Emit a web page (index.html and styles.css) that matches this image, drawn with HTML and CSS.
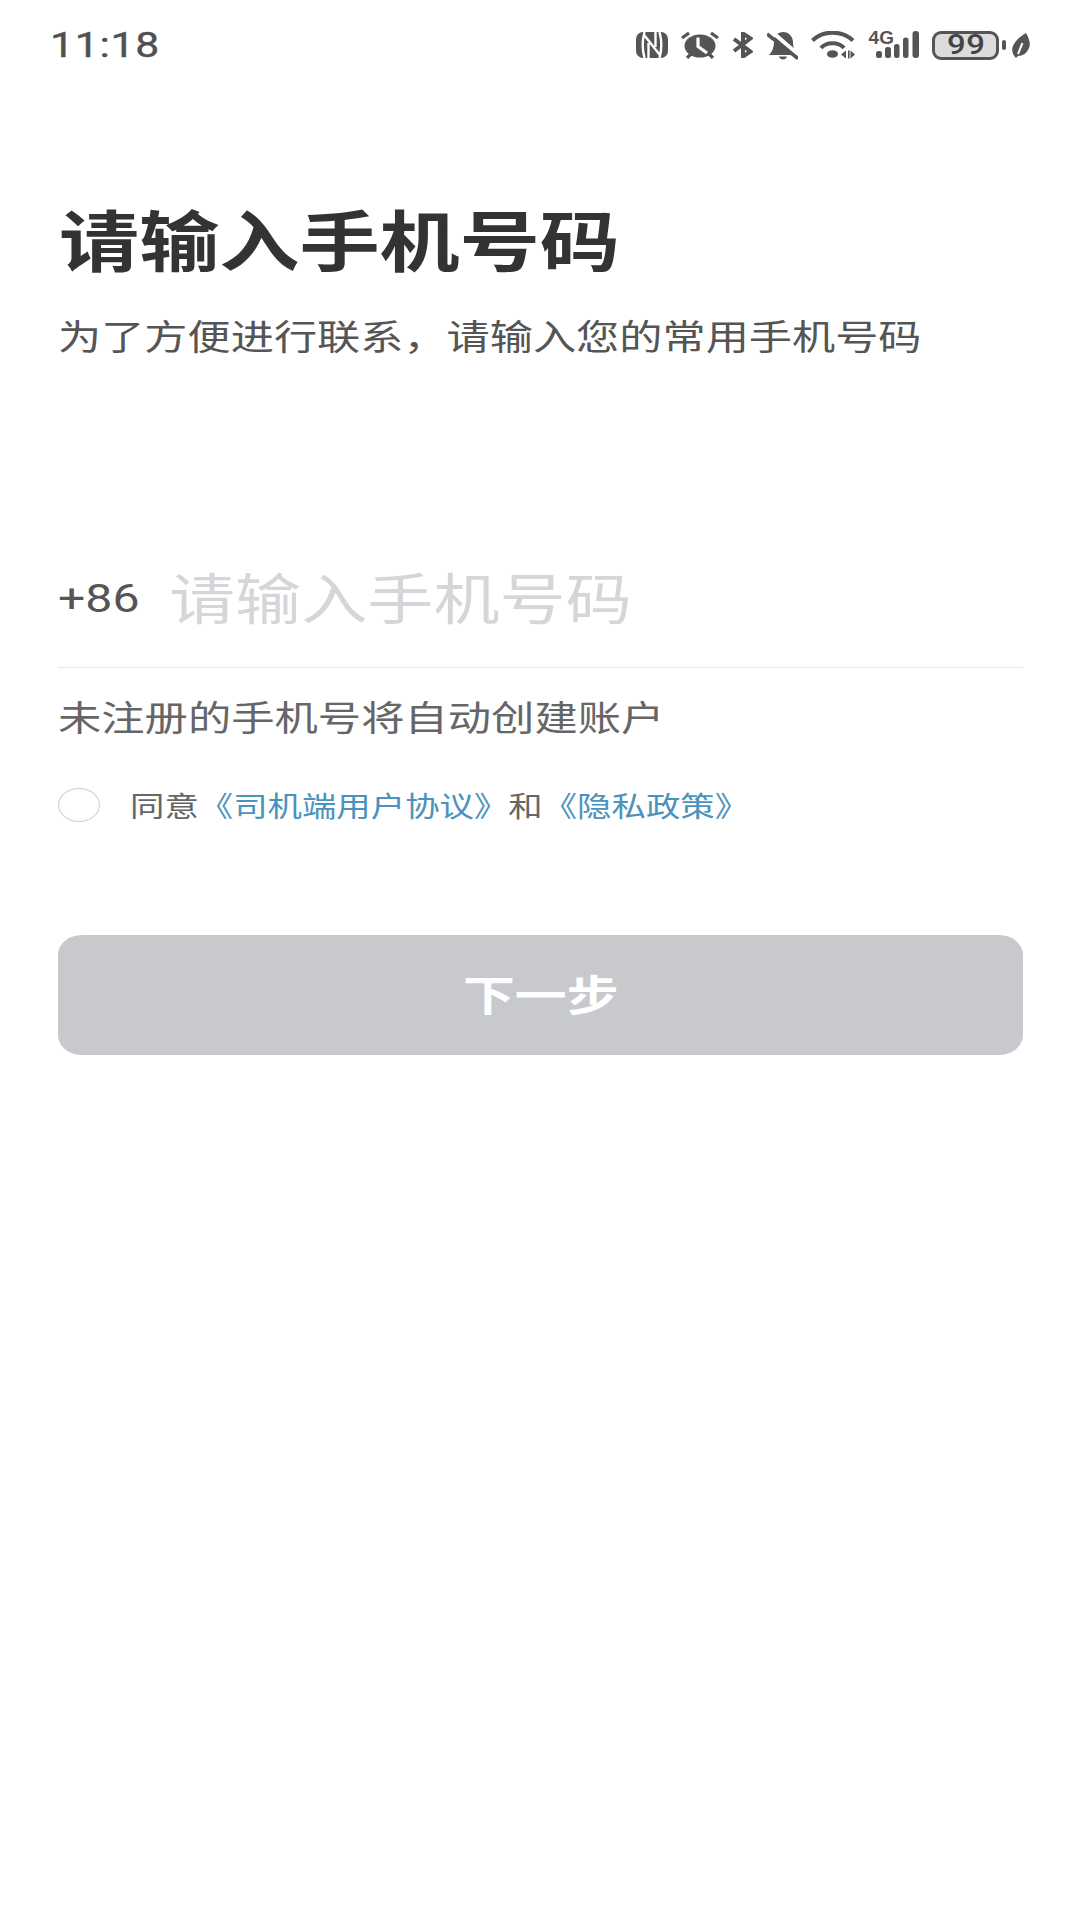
FILE: index.html
```html
<!DOCTYPE html>
<html lang="zh-CN">
<head>
<meta charset="utf-8">
<title>请输入手机号码</title>
<link rel="stylesheet" href="styles.css">
</head>
<body>
<div class="page">
  <header class="status">
    <span class="wide time">11:18</span>
    <div class="icons">
      <svg class="i-nfc" viewBox="0 0 32 26"><rect width="32" height="26" rx="7" fill="#555"/><path d="M8.500 0C6 9 6 17 8.500 26M8.500 3.500L23.500 22.500M23.500 0C26 9 26 17 23.500 26M12.500 26V11M19.500 0V15" fill="none" stroke="#fff" stroke-width="2.400"/></svg>
      <svg class="i-alarm" viewBox="0 0 38 27"><ellipse cx="19" cy="14" rx="15.500" ry="11.500" fill="#555"/><path d="M1 6L8 1M37 6L30 1M6 26L10 22M32 26L28 22" stroke="#555" stroke-width="3.200" fill="none"/><path d="M17 5.500V14.500L26 21" stroke="#fff" stroke-width="3.200" fill="none"/></svg>
      <svg class="i-bt" viewBox="0 0 21 26"><path d="M2 7L18.500 19.500L11 24.500V1.500L18.500 6.500L2 19" fill="none" stroke="#555" stroke-width="4"/></svg>
      <svg class="i-bell" viewBox="0 0 31 29"><path d="M2 24C6 20 7 15 7 10C7 5 11 1 16 1C22 1 26 6 26 11C26 16 27 20 30 24Z" fill="#555"/><path d="M12 25.500H20C19 29.500 13 29.500 12 25.500Z" fill="#555"/><path d="M4 0L33 25" stroke="#fff" stroke-width="4"/><path d="M0 3L31 27.500" stroke="#555" stroke-width="3.600"/></svg>
      <svg class="i-wifi" viewBox="0 0 44 28"><path d="M1.500 9.500C12 -1 31 -1 42 9.500M10 17C15 10.500 28 10.500 33 17" fill="none" stroke="#555" stroke-width="4"/><ellipse cx="21.500" cy="23" rx="5.500" ry="3.800" fill="#555"/><path d="M30 23.500L35 19.500V27.500ZM37 19.500V27.500H38.600V19.500ZM39.500 19.500L44 23.500L39.500 27.500Z" fill="#555"/></svg>
      <div class="i-net">
        <span class="net-text">4G</span>
        <svg class="i-bars" viewBox="0 0 50 28"><rect x="7" y="20" width="6" height="7" rx="2.500" fill="#555"/><rect x="16" y="16" width="6" height="11" rx="2.500" fill="#555"/><rect x="25" y="13" width="5.500" height="14" rx="2.500" fill="#555"/><rect x="34" y="6.500" width="5.500" height="20.500" rx="2.500" fill="#555"/><rect x="43.500" y="0" width="6.500" height="27" rx="3" fill="#555"/></svg>
      </div>
      <div class="battery-group">
        <div class="battery"><span class="wide batt-num">99</span></div>
        <span class="batt-tip"></span>
        <svg class="i-leaf" viewBox="0 0 18 25"><path d="M14 0C17 5 19 11 17 15C15 20 11 23 6 23L4 25L3 24C0 20 -1 16 2 11C4 7 9 3 14 0Z" fill="#555"/><path d="M6 21L10.500 10" stroke="#fff" stroke-width="2"/></svg>
      </div>
    </div>
  </header>

  <main class="content">
    <h1 class="title"><span class="wide">请输入手机号码</span></h1>
    <p class="sub"><span class="wide">为了方便进行联系，请输入您的常用手机号码</span></p>

    <div class="phone-row">
      <span class="prefix"><span class="wide">+86</span></span>
      <span class="placeholder"><span class="wide">请输入手机号码</span></span>
    </div>

    <p class="hint"><span class="wide">未注册的手机号将自动创建账户</span></p>

    <div class="agree">
      <span class="radio"></span>
      <span class="wide agree-text">同意<a class="link">《司机端用户协议》</a>和<a class="link">《隐私政策》</a></span>
    </div>

    <div class="button"><span class="wide-c">下一步</span></div>
  </main>
</div>
</body>
</html>
```

FILE: styles.css
```css
* { box-sizing: border-box; }
html, body { margin: 0; padding: 0; background: #fff; }
body { font-family: "Noto Sans CJK SC", "Noto Sans", sans-serif; overflow: hidden; }
.page { width: 1080px; height: 1920px; display: flex; flex-direction: column; }

.wide { display: inline-block; transform: scaleX(1.22); transform-origin: 0 50%; white-space: nowrap; }
.wide-c { display: inline-block; transform: scaleX(1.22); transform-origin: 50% 50%; white-space: nowrap; }

.status { height: 90px; padding: 0 50px; display: flex; align-items: center; justify-content: space-between; }
.time { font-family: Roboto, sans-serif; font-size: 35px; line-height: 40px; margin-top: 2px; color: #505050; letter-spacing: 0.6px; -webkit-text-stroke: 0.4px #505050; }
.icons { display: flex; align-items: center; gap: 13.4px; }
.icons svg { display: block; }
.i-nfc { width: 32px; height: 26px; }
.i-alarm { width: 38px; height: 27px; }
.i-bt { width: 21px; height: 26px; }
.i-bell { width: 31px; height: 29px; }
.i-wifi { width: 44px; height: 28px; }
.i-net { width: 50px; height: 28px; position: relative; }
.i-bars { width: 50px; height: 28px; }
.net-text { position: absolute; left: 0; top: -2px; font-family: "Liberation Sans", sans-serif; font-weight: 700; font-size: 19px; line-height: 17px; color: #555; z-index: 1; background: #fff; }
.battery-group { display: flex; align-items: center; }
.battery { width: 67px; height: 29px; border: 3px solid #555; border-radius: 9px; background: #dcdcdc; padding-left: 12px; display: flex; align-items: center; }
.batt-num { font-family: Roboto, sans-serif; font-weight: 500; font-size: 27px; line-height: 23px; color: #444; letter-spacing: 0.5px; }
.batt-tip { width: 4px; height: 10px; margin-left: 3px; background: #555; border-radius: 2px; }
.i-leaf { width: 18px; height: 25px; margin-left: 6px; }

.content { padding: 0 57px 0 58px; display: flex; flex-direction: column; }
.title { margin: 108px 0 0 1px; font-size: 65.7px; line-height: 80px; font-weight: 700; color: #333; }
.sub { margin: 32px 0 0; font-size: 35.4px; line-height: 50px; color: #555; }
.phone-row { margin-top: 187px; height: 121px; padding-bottom: 21px; display: flex; align-items: center; border-bottom: 1.5px solid #e8e8ea; }
.prefix { width: 111px; font-family: Roboto, sans-serif; font-size: 39.5px; color: #555; padding-top: 3px; }
.placeholder { font-size: 54.2px; color: #d5d6d9; padding-bottom: 2px; }
.hint { margin: 23px 0 0; font-size: 35.5px; line-height: 50px; color: #666; }
.agree { margin-top: 47px; height: 34px; display: flex; align-items: center; gap: 30px; }
.radio { width: 42px; height: 34px; border: 1.5px solid #d0d0d0; border-radius: 50%; flex: none; }
.agree-text { font-size: 28.2px; line-height: 34px; color: #666; }
.link { color: #4b93bd; }
.button { margin-top: 113px; height: 120px; padding-bottom: 5px; background: #c8c9cd; border-radius: 24px / 20px; display: flex; align-items: center; justify-content: center; color: #fff; font-size: 42.5px; font-weight: 700; }
```
